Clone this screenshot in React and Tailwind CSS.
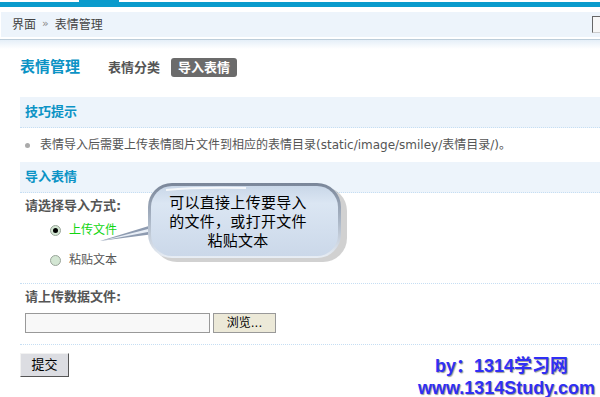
import React from 'react';

const font = { fontFamily: '"DejaVu Sans", "Noto Sans CJK SC", sans-serif' };

const Radio = ({ checked, label, green }) => (
  <label className="flex items-center h-[20px] pl-[30px]">
    <span className="w-[11px] h-[11px] rounded-full border border-[#9aa59a] bg-[#d3e6d3] flex items-center justify-center">
      {checked && <span className="w-[5px] h-[5px] rounded-full bg-black" />}
    </span>
    <span className={`ml-[8px] text-[12px] ${green ? 'text-[#11d611]' : 'text-[#555]'}`}>{label}</span>
  </label>
);

const SectionHead = ({ children }) => (
  <div className="h-[31px] bg-[#edf4fb] border-b border-dotted border-[#c6def3] flex items-center pl-[5px]">
    <span className="text-[13px] font-bold text-[#0b93c5]">{children}</span>
  </div>
);

const Callout = () => (
  <div className="absolute left-[96px] top-[178px] w-[256px] h-[90px]">
    <svg width="256" height="90" className="absolute inset-0">
      <defs>
        <linearGradient id="bub" x1="0" y1="0" x2="0" y2="1">
          <stop offset="0" stopColor="#c9d7e8" />
          <stop offset="0.25" stopColor="#dbe6f3" />
          <stop offset="1" stopColor="#cbd8e9" />
        </linearGradient>
        <linearGradient id="rim" x1="0" y1="0" x2="0" y2="1">
          <stop offset="0" stopColor="#7a8699" />
          <stop offset="0.5" stopColor="#aab6c6" />
          <stop offset="1" stopColor="#e8eef5" />
        </linearGradient>
      </defs>
      <rect x="57" y="9" width="194" height="75" rx="24" fill="#9a9a9a" opacity="0.45" />
      <path d="M4 63 L56 47 L58 56 Z" fill="#8e9bb0" />
      <path d="M5 63 L56 50 L57 53 Z" fill="#e8eef6" />
      <rect x="52" y="5" width="193" height="75" rx="24" fill="url(#rim)" />
      <rect x="55" y="8" width="187" height="70" rx="21" fill="url(#bub)" />
      <path d="M70 12 Q100 9 150 10" stroke="#ffffff" strokeWidth="2" fill="none" opacity="0.8" />
    </svg>
    <div className="absolute left-[68px] top-[16px] w-[148px] text-center text-[15px] leading-[19px] text-black tracking-[0.3px]">
      可以直接上传要导入
      <br />
      的文件，或打开文件
      <br />
      粘贴文本
    </div>
  </div>
);

export default function App() {
  return (
    <div className="relative w-[600px] h-[397px] overflow-hidden bg-white text-[#555]" style={font}>
      <div className="flex h-[7px]">
        <div className="w-[79px] mt-[2px] bg-[#0a9bcc]" />
        <div className="w-[40px] bg-[#0a9bcc]" />
        <div className="flex-1 mt-[2px] bg-[#0a9bcc]" />
      </div>

      <div className="mt-[5px] ml-[1px] h-[25px] bg-[#edf4fb] flex items-center pl-[11px] text-[12px] text-[#444]">
        <span>界面</span>
        <span className="mx-[6px] text-[#8a8a8a] text-[11px]">»</span>
        <span>表情管理</span>
        <div className="ml-auto mr-[-10px] w-[18px] h-[17px] border border-[#666] border-b-[#ccc] bg-[#f7f7f7]" />
      </div>

      <div className="mt-[2px] h-[1px] bg-[#bccdda]" />
      <div className="h-[9px] bg-gradient-to-b from-[#e5eff8] to-white" />

      <div className="flex items-center h-[19px] mt-[9px] pl-[20px]">
        <span className="text-[15px] font-bold text-[#0b93c5]">表情管理</span>
        <span className="ml-[28px] text-[13px] font-bold text-[#555]">表情分类</span>
        <span className="ml-[11px] h-[19px] px-[7px] rounded-[3px] bg-[#6b6b6b] text-white text-[13px] font-bold flex items-center">导入表情</span>
      </div>

      <div className="mt-[20px] ml-[20px]">
        <SectionHead>技巧提示</SectionHead>
        <div className="h-[34px] flex items-center pl-[5px] text-[12px] text-[#555]">
          <span className="w-[5px] h-[5px] rounded-full bg-[#aaa]" />
          <span className="ml-[10px]">表情导入后需要上传表情图片文件到相应的表情目录(static/image/smiley/表情目录/)。</span>
        </div>
        <SectionHead>导入表情</SectionHead>

        <div className="pl-[5px] pt-[4px] h-[22px] flex items-center text-[13px] font-bold text-[#555]">请选择导入方式:</div>
        <div className="mt-[5px]">
          <Radio checked green label="上传文件" />
        </div>
        <div className="mt-[10px]">
          <Radio label="粘贴文本" />
        </div>
        <div className="mt-[13px] border-b border-dotted border-[#c6def3]" />

        <div className="pl-[5px] h-[25px] flex items-center text-[13px] font-bold text-[#555]">请上传数据文件:</div>
        <div className="flex items-center pl-[5px] mt-[4px] gap-[3px]">
          <div className="w-[185px] h-[20px] border border-[#999] bg-[#f8f8f8]" />
          <button className="w-[63px] h-[20px] border border-[#999] bg-[#ece9d8] text-[12px] text-black leading-none">浏览...</button>
        </div>
        <div className="mt-[11px] border-b border-dotted border-[#c6def3]" />

        <button className="mt-[8px] w-[49px] h-[24px] bg-[#dcdde2] border border-[#f2f2f2] border-r-[#555] border-b-[#555] text-[13px] text-black">提交</button>
      </div>

      <Callout />

      <div className="absolute right-[5px] top-[355px] flex flex-col items-end text-[18px] font-bold text-[#2f2ff5] leading-[22px] [text-shadow:1px_1px_1px_#9a9a9a]" style={{ fontFamily: '"Liberation Sans", "Noto Sans CJK SC", sans-serif' }}>
        <span className="mr-[27px]">by：1314学习网</span>
        <span>www.1314Study.com</span>
      </div>
    </div>
  );
}
